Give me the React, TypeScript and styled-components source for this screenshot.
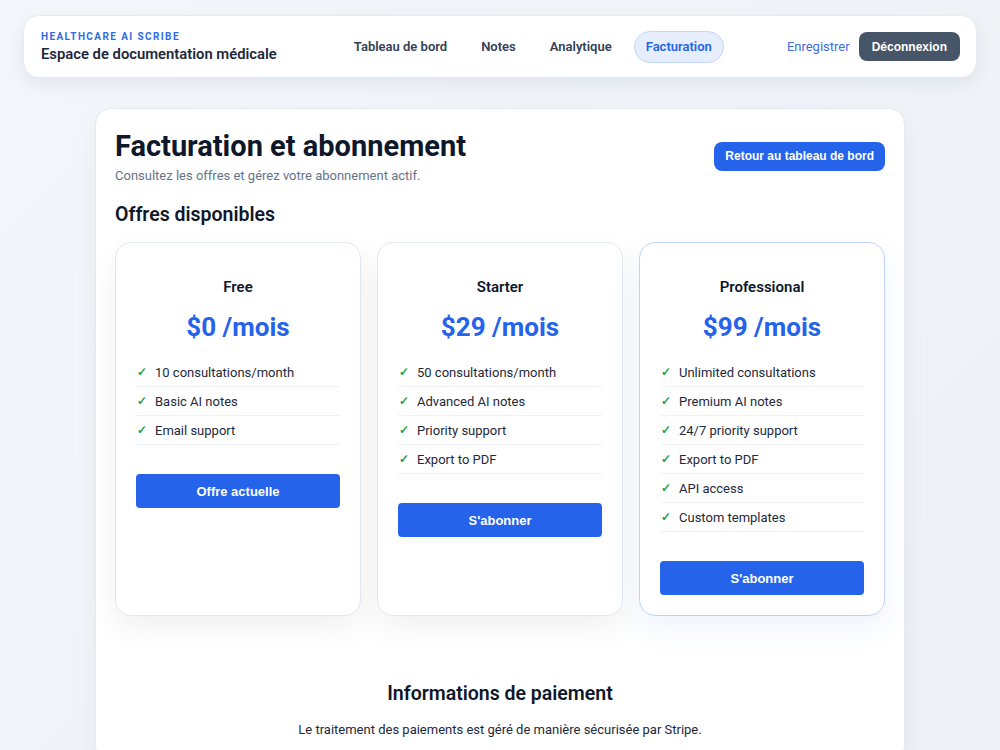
import styled, { createGlobalStyle } from "styled-components";

const GlobalStyle = createGlobalStyle`
  * {
    box-sizing: border-box;
  }
  body {
    margin: 0;
    font-family: Roboto, "Noto Sans", sans-serif;
    color: #0f172a;
    background: linear-gradient(135deg, #f3f6fb 0%, #edf1f7 100%);
    min-height: 100vh;
  }
`;

const Page = styled.div`
  padding: 15px 23px 0;
  min-height: 100vh;
`;

const Header = styled.header`
  height: 63px;
  display: flex;
  align-items: center;
  padding: 0 16px 0 17px;
  background: #ffffff;
  border: 1px solid #e6ebf3;
  border-radius: 16px;
  box-shadow: 0 6px 18px rgba(15, 23, 42, 0.07);
`;

const Brand = styled.div`
  display: flex;
  flex-direction: column;
  gap: 3px;
`;

const Kicker = styled.span`
  font-size: 10px;
  font-weight: 700;
  letter-spacing: 1.4px;
  color: #2f6ce6;
`;

const BrandTitle = styled.span`
  font-size: 14.8px;
  font-weight: 600;
  color: #1e293b;
`;

const Nav = styled.nav`
  display: flex;
  align-items: center;
  gap: 10px;
  margin-left: 65px;
`;

const NavItem = styled.a<{ $active?: boolean }>`
  height: 32px;
  display: flex;
  align-items: center;
  padding: 0 11px;
  border-radius: 16px;
  font-size: 13px;
  font-weight: 600;
  color: ${(p) => (p.$active ? "#2563eb" : "#334155")};
  background: ${(p) => (p.$active ? "#e6eefd" : "transparent")};
  border: 1px solid ${(p) => (p.$active ? "#c5d6fb" : "transparent")};
  cursor: pointer;
`;

const Actions = styled.div`
  display: flex;
  align-items: center;
  gap: 9px;
  margin-left: auto;
`;

const TextLink = styled.a`
  font-size: 13px;
  color: #3b6ee8;
  cursor: pointer;
`;

const DarkButton = styled.button`
  height: 29px;
  padding: 0 13px;
  border: none;
  border-radius: 8px;
  background: #475569;
  color: #ffffff;
  font-family: "Liberation Sans", Arial, sans-serif;
  font-size: 12px;
  font-weight: 700;
  cursor: pointer;
`;

const Main = styled.main`
  width: 810px;
  margin: 30px auto 0;
  padding: 20px 19px 24px;
  background: #ffffff;
  border: 1px solid #e5eaf2;
  border-radius: 16px;
  box-shadow: 0 8px 24px rgba(15, 23, 42, 0.05);
`;

const TitleRow = styled.div`
  display: flex;
  align-items: center;
  justify-content: space-between;
`;

const Title = styled.h1`
  margin: 0;
  font-size: 29px;
  font-weight: 700;
  color: #0f172a;
  line-height: 34px;
`;

const Subtitle = styled.p`
  margin: 5px 0 0;
  font-size: 13px;
  color: #64748b;
`;

const BlueButton = styled.button<{ $wide?: boolean }>`
  height: ${(p) => (p.$wide ? "34px" : "29px")};
  width: ${(p) => (p.$wide ? "100%" : "auto")};
  padding: 0 ${(p) => (p.$wide ? "15px" : "11px")};
  border: none;
  border-radius: ${(p) => (p.$wide ? "4px" : "8px")};
  background: #2563eb;
  color: #ffffff;
  font-family: "Liberation Sans", Arial, sans-serif;
  font-size: ${(p) => (p.$wide ? "13px" : "12px")};
  font-weight: 700;
  cursor: pointer;
`;

const SectionTitle = styled.h2`
  margin: 20px 0 16px;
  font-size: 19.5px;
  font-weight: 600;
  color: #0f172a;
`;

const Plans = styled.div`
  display: grid;
  grid-template-columns: repeat(3, 1fr);
  gap: 16px;
`;

const PlanCard = styled.div<{ $featured?: boolean }>`
  display: flex;
  flex-direction: column;
  padding: 34px 20px 20px;
  border-radius: 16px;
  background: #ffffff;
  border: 1px solid ${(p) => (p.$featured ? "#bfd3fb" : "#e3e8f0")};
  box-shadow: 0 12px 30px
    ${(p) => (p.$featured ? "rgba(37, 99, 235, 0.08)" : "rgba(15, 23, 42, 0.06)")};
`;

const PlanName = styled.h3`
  margin: 0;
  text-align: center;
  font-size: 15px;
  font-weight: 600;
  line-height: 21px;
  color: #0f172a;
`;

const Price = styled.div`
  margin-top: 13px;
  text-align: center;
  font-size: 26px;
  font-weight: 700;
  line-height: 32px;
  color: #2563eb;
`;

const Features = styled.ul`
  list-style: none;
  margin: 15px 0 29px;
  padding: 0;
`;

const Feature = styled.li`
  display: flex;
  align-items: center;
  gap: 7px;
  height: 29px;
  padding-left: 1px;
  border-bottom: 1px solid #eef1f5;
  font-size: 13px;
  color: #1e293b;
`;

const Check = styled.span`
  width: 11px;
  font-size: 12px;
  font-weight: 700;
  color: #22a34a;
`;

const Payment = styled.section`
  margin-top: 66px;
  text-align: center;
`;

const PaymentTitle = styled.h2`
  margin: 0;
  font-size: 19.5px;
  font-weight: 600;
  color: #0f172a;
`;

const PaymentText = styled.p`
  margin: 17px 0 0;
  font-size: 13px;
  color: #1e293b;
`;

const plans = [
  {
    name: "Free",
    price: "$0 /mois",
    features: ["10 consultations/month", "Basic AI notes", "Email support"],
    cta: "Offre actuelle",
  },
  {
    name: "Starter",
    price: "$29 /mois",
    features: [
      "50 consultations/month",
      "Advanced AI notes",
      "Priority support",
      "Export to PDF",
    ],
    cta: "S'abonner",
  },
  {
    name: "Professional",
    price: "$99 /mois",
    features: [
      "Unlimited consultations",
      "Premium AI notes",
      "24/7 priority support",
      "Export to PDF",
      "API access",
      "Custom templates",
    ],
    cta: "S'abonner",
    featured: true,
  },
];

const navLinks = ["Tableau de bord", "Notes", "Analytique", "Facturation"];

function App() {
  return (
    <>
      <GlobalStyle />
      <Page>
        <Header>
          <Brand>
            <Kicker>HEALTHCARE AI SCRIBE</Kicker>
            <BrandTitle>Espace de documentation médicale</BrandTitle>
          </Brand>
          <Nav>
            {navLinks.map((link) => (
              <NavItem key={link} $active={link === "Facturation"}>
                {link}
              </NavItem>
            ))}
          </Nav>
          <Actions>
            <TextLink>Enregistrer</TextLink>
            <DarkButton>Déconnexion</DarkButton>
          </Actions>
        </Header>
        <Main>
          <TitleRow>
            <div>
              <Title>Facturation et abonnement</Title>
              <Subtitle>Consultez les offres et gérez votre abonnement actif.</Subtitle>
            </div>
            <BlueButton>Retour au tableau de bord</BlueButton>
          </TitleRow>
          <SectionTitle>Offres disponibles</SectionTitle>
          <Plans>
            {plans.map((plan) => (
              <PlanCard key={plan.name} $featured={plan.featured}>
                <PlanName>{plan.name}</PlanName>
                <Price>{plan.price}</Price>
                <Features>
                  {plan.features.map((f) => (
                    <Feature key={f}>
                      <Check>✓</Check>
                      {f}
                    </Feature>
                  ))}
                </Features>
                <BlueButton $wide>{plan.cta}</BlueButton>
              </PlanCard>
            ))}
          </Plans>
          <Payment>
            <PaymentTitle>Informations de paiement</PaymentTitle>
            <PaymentText>
              Le traitement des paiements est géré de manière sécurisée par Stripe.
            </PaymentText>
          </Payment>
        </Main>
      </Page>
    </>
  );
}

export default App;
